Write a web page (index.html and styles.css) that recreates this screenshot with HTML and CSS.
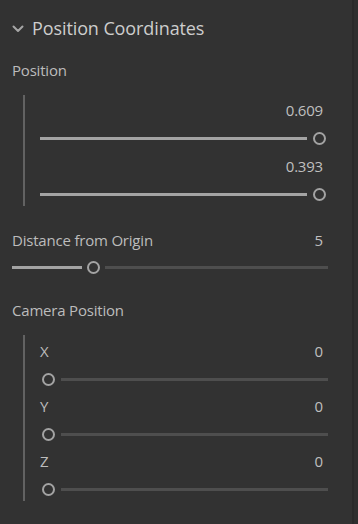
FILE: index.html
```html
<!DOCTYPE html>
<html>
<head>
<meta charset="utf-8">
<link rel="stylesheet" href="styles.css">
</head>
<body>
<div class="frame">
  <div class="panel">
    <div class="header">
      <svg class="chevron" width="12" height="8" viewBox="0 0 12 8"><path d="M1.5 1.5 L6 6 L10.5 1.5" fill="none" stroke="#a6a6a6" stroke-width="2" stroke-linecap="round" stroke-linejoin="round"/></svg>
      <span class="title">Position Coordinates</span>
    </div>

    <div class="label">Position</div>
    <div class="group group-pos">
      <div class="row">
        <div class="row-head"><span></span><span class="value">0.609</span></div>
        <div class="slider">
          <div class="fill full"></div>
          <div class="handle"></div>
        </div>
      </div>
      <div class="row">
        <div class="row-head"><span></span><span class="value">0.393</span></div>
        <div class="slider">
          <div class="fill full"></div>
          <div class="handle"></div>
        </div>
      </div>
    </div>

    <div class="distance">
      <div class="row-head"><span class="label-inline">Distance from Origin</span><span class="value">5</span></div>
      <div class="slider slider-dist">
        <div class="fill" style="width:70px"></div>
        <div class="handle"></div>
        <div class="rest"></div>
      </div>
    </div>

    <div class="label label-cam">Camera Position</div>
    <div class="group group-cam">
      <div class="row">
        <div class="row-head"><span class="axis">X</span><span class="value">0</span></div>
        <div class="slider slider-zero">
          <div class="handle"></div>
          <div class="rest"></div>
        </div>
      </div>
      <div class="row">
        <div class="row-head"><span class="axis">Y</span><span class="value">0</span></div>
        <div class="slider slider-zero">
          <div class="handle"></div>
          <div class="rest"></div>
        </div>
      </div>
      <div class="row">
        <div class="row-head"><span class="axis">Z</span><span class="value">0</span></div>
        <div class="slider slider-zero">
          <div class="handle"></div>
          <div class="rest"></div>
        </div>
      </div>
    </div>
  </div>
  <div class="edge"></div>
</div>
</body>
</html>
```

FILE: styles.css
```css
* { box-sizing: border-box; }
html, body {
  margin: 0;
  padding: 0;
  background: #323232;
}
body {
  width: 358px;
  height: 524px;
  overflow: hidden;
  font-family: "Open Sans", "Noto Sans", sans-serif;
  color: #bdbdbd;
}
.frame {
  display: flex;
  height: 524px;
}
.panel {
  flex: 1;
  padding: 0 24px 0 12px;
}
.edge {
  width: 6px;
  border-left: 2px solid #2a2a2a;
  background: #2f2f2f;
}
.header {
  height: 56px;
  display: flex;
  align-items: center;
  gap: 8px;
}
.chevron {
  display: block;
  margin-top: 1px;
}
.title {
  font-size: 18px;
  color: #cdcdcd;
  letter-spacing: -0.1px;
}
.label {
  margin-top: 4px;
  height: 20px;
  line-height: 20px;
  font-size: 15px;
  letter-spacing: -0.2px;
  color: #bcbcbc;
}
.label-cam {
  margin-top: 21px;
}
.group {
  margin-top: 15px;
  margin-left: 11px;
  border-left: 2px solid #626262;
  padding-left: 15px;
}
.group-pos { padding-top: 5px; }
.group-cam { padding-top: 6px; }
.group-pos .row + .row { margin-top: 6px; }
.group-cam .row + .row { margin-top: 5px; }
.row-head {
  height: 20px;
  line-height: 20px;
  display: flex;
  justify-content: space-between;
  font-size: 15px;
  letter-spacing: -0.2px;
  padding-right: 5px;
}
.value { color: #bfbfbf; }
.axis { color: #bcbcbc; }
.label-inline { color: #bcbcbc; }
.row .row-head { margin-bottom: 6px; }
.slider {
  height: 24px;
  display: flex;
  align-items: center;
}
.fill {
  height: 3px;
  background: #a3a3a3;
  margin-right: 6px;
}
.fill.full { flex: 1; }
.handle {
  width: 13px;
  height: 13px;
  border-radius: 50%;
  border: 2px solid #a3a3a3;
  flex: none;
}
.rest {
  flex: 1;
  height: 3px;
  background: #4e4e4e;
  margin-left: 6px;
}
.group-pos .slider { padding-right: 2px; }
.slider-zero { padding-left: 2px; }
.distance { margin-top: 24px; }
.distance .row-head { margin-bottom: 5px; }
.slider-dist .fill { margin-right: 5px; }
.slider-dist .rest { margin-left: 5px; }
```
